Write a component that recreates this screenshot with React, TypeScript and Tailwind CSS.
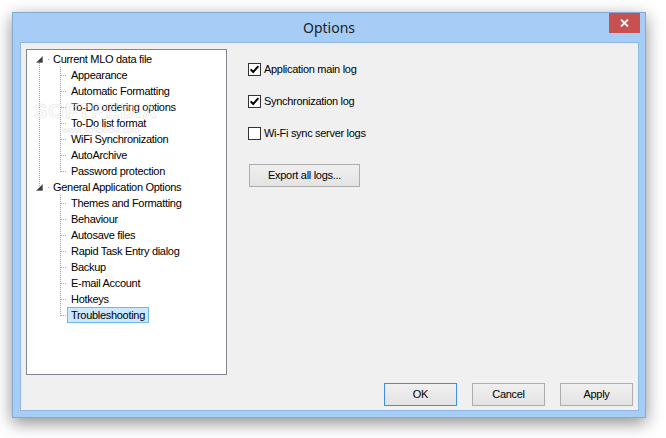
import React from "react";

type Row = {
  t: string;
  root?: boolean;
  lineDown?: boolean;
  lineUp?: boolean;
  rootThrough?: boolean;
  last?: boolean;
  selected?: boolean;
};

const rows: Row[] = [
  { t: "Current MLO data file", root: true, lineDown: true },
  { t: "Appearance", rootThrough: true },
  { t: "Automatic Formatting", rootThrough: true },
  { t: "To-Do ordering options", rootThrough: true },
  { t: "To-Do list format", rootThrough: true },
  { t: "WiFi Synchronization", rootThrough: true },
  { t: "AutoArchive", rootThrough: true },
  { t: "Password protection", rootThrough: true, last: true },
  { t: "General Application Options", root: true, lineUp: true },
  { t: "Themes and Formatting" },
  { t: "Behaviour" },
  { t: "Autosave files" },
  { t: "Rapid Task Entry dialog" },
  { t: "Backup" },
  { t: "E-mail Account" },
  { t: "Hotkeys" },
  { t: "Troubleshooting", last: true, selected: true },
];

const DOT = "#a0a0a0";

function Gutter({ row }: { row: Row }) {
  if (row.root) {
    return (
      <svg width={22} height={16} className="shrink-0" shapeRendering="crispEdges">
        {row.lineDown && (
          <line x1={12.5} y1={8} x2={12.5} y2={16} stroke={DOT} strokeDasharray="1 1" />
        )}
        {row.lineUp && (
          <line x1={12.5} y1={0} x2={12.5} y2={8} stroke={DOT} strokeDasharray="1 1" />
        )}
        <rect x={21} y={8} width={1} height={1} fill={DOT} />
        <polygon points="15.5,5.5 15.5,11.5 9.5,11.5" fill="#3c3c3c" stroke="#6a6a6a" strokeWidth={0.6} shapeRendering="auto" />
      </svg>
    );
  }
  return (
    <svg width={40} height={16} className="shrink-0" shapeRendering="crispEdges">
      {row.rootThrough && (
        <line x1={12.5} y1={0} x2={12.5} y2={16} stroke={DOT} strokeDasharray="1 1" />
      )}
      <line x1={33.5} y1={0} x2={33.5} y2={row.last ? 9 : 16} stroke={DOT} strokeDasharray="1 1" />
      <line x1={34} y1={8.5} x2={41} y2={8.5} stroke={DOT} strokeDasharray="1 1" />
    </svg>
  );
}

function Checkbox({ checked, label }: { checked: boolean; label: string }) {
  return (
    <div className="flex items-center gap-[3px] h-[13px]">
      <div className="w-[13px] h-[13px] border border-[#333333] bg-white flex items-center justify-center shrink-0">
        {checked && (
          <svg width={11} height={11} viewBox="0 0 11 11">
            <path d="M1.6 5.4 L4.2 8 L9.4 2.2" fill="none" stroke="#000" strokeWidth={2} />
          </svg>
        )}
      </div>
      <span className="leading-[13px]">{label}</span>
    </div>
  );
}

function Btn({ children, w, primary }: { children: React.ReactNode; w: string; primary?: boolean }) {
  return (
    <div
      className={`${w} h-[23px] border ${
        primary ? "border-[#3c8fe3]" : "border-[#adadad]"
      } bg-gradient-to-b from-[#f0f0f0] to-[#e3e3e3] flex items-center justify-center`}
    >
      {children}
    </div>
  );
}

export default function App() {
  return (
    <div className="w-[666px] h-[438px] bg-white pl-[12px] pt-[12px] font-['Liberation_Sans',Arial,sans-serif] text-[11px] tracking-[-0.3px] text-black">
      <div className="w-[634px] h-[406px] border border-[#83a8d6] bg-[#a6cdf6] flex flex-col shadow-[0_5px_16px_rgba(0,0,0,0.45)]">
        {/* Title bar */}
        <div className="h-[29px] grid grid-cols-[1fr_auto_1fr]">
          <div />
          <div className="flex items-center font-['Noto_Sans',sans-serif] text-[14px] tracking-normal text-[#222]">
            Options
          </div>
          <div className="flex justify-end items-start pr-[5px]">
            <div className="w-[31px] h-[20px] bg-[#c75050] flex items-center justify-center">
              <svg width={9} height={8} viewBox="0 0 9 8">
                <path d="M1 0.5 L8 7.5 M8 0.5 L1 7.5" stroke="#fff" strokeWidth={1.8} />
              </svg>
            </div>
          </div>
        </div>

        {/* Client area */}
        <div className="flex-1 ml-[7px] mr-[6px] mb-[6px] border border-[#8fb6e3] bg-[#f0f0f0] flex flex-col pt-[6px] pl-[5px] pr-[5px] pb-[4px]">
          <div className="h-[326px] flex">
            {/* Tree */}
            <div className="relative w-[201px] h-[326px] border border-[#828790] bg-white pt-[1px] overflow-hidden">
              {rows.map((r, i) => (
                <div key={i} className="flex h-[16px]">
                  <Gutter row={r} />
                  <div
                    className={`h-[16px] px-[3px] border leading-[14px] whitespace-nowrap ${
                      r.selected ? "bg-[#cce8ff] border-[#6cb9ec]" : "border-transparent"
                    }`}
                  >
                    {r.t}
                  </div>
                </div>
              ))}
              <div className="absolute left-[7px] top-[46px] text-[20px] tracking-[1px] font-bold text-transparent [-webkit-text-stroke:0.6px_#e2e2e2] pointer-events-none">
                SOFTPEDIA
              </div>
              <div className="absolute left-[35px] top-[74px] text-[9px] tracking-normal text-[#e6e6e6] pointer-events-none">
                www.softpedia.com
              </div>
            </div>

            {/* Right panel */}
            <div className="flex flex-col pl-[21px] pt-[14px]">
              <Checkbox checked label="Application main log" />
              <div className="h-[19px]" />
              <Checkbox checked label="Synchronization log" />
              <div className="h-[19px]" />
              <Checkbox checked={false} label="Wi-Fi sync server logs" />
              <div className="h-[24px]" />
              <div className="pl-[1px]">
                <Btn w="w-[111px]">Export all logs...</Btn>
              </div>
            </div>
          </div>

          {/* Bottom buttons */}
          <div className="mt-[8px] flex justify-end gap-[15px]">
            <Btn w="w-[73px]" primary>
              OK
            </Btn>
            <Btn w="w-[73px]">Cancel</Btn>
            <Btn w="w-[73px]">Apply</Btn>
          </div>
        </div>
      </div>
    </div>
  );
}
